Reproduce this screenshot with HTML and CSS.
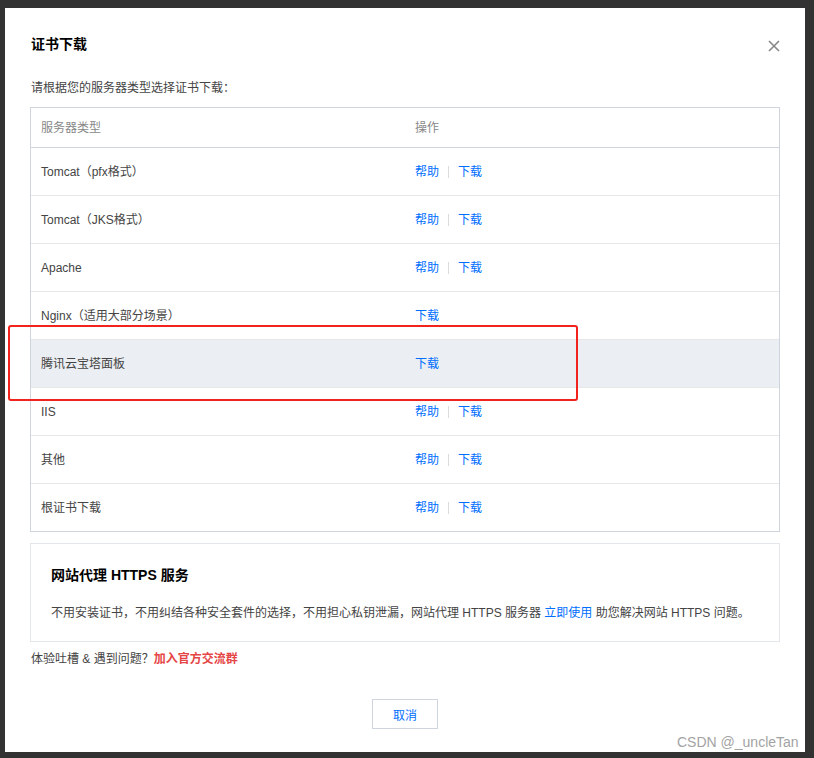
FILE: index.html
```html
<!DOCTYPE html>
<html lang="zh-CN">
<head>
<meta charset="utf-8">
<title>证书下载</title>
<link rel="stylesheet" href="styles.css">
</head>
<body>
<div class="dialog">
  <div class="dialog-head">
    <h2 class="dialog-title">证书下载</h2>
    <span class="close" aria-label="关闭">
      <svg width="12" height="12" viewBox="0 0 12 12"><path d="M1 1L11 11M11 1L1 11" stroke="#888" stroke-width="1.6" fill="none"/></svg>
    </span>
  </div>
  <p class="intro">请根据您的服务器类型选择证书下载：</p>
  <div class="table">
    <div class="row head">
      <div class="cell">服务器类型</div>
      <div class="cell">操作</div>
    </div>
    <div class="row">
      <div class="cell">Tomcat（pfx格式）</div>
      <div class="cell ops"><a class="link">帮助</a><span class="sep"></span><a class="link">下载</a></div>
    </div>
    <div class="row">
      <div class="cell">Tomcat（JKS格式）</div>
      <div class="cell ops"><a class="link">帮助</a><span class="sep"></span><a class="link">下载</a></div>
    </div>
    <div class="row">
      <div class="cell">Apache</div>
      <div class="cell ops"><a class="link">帮助</a><span class="sep"></span><a class="link">下载</a></div>
    </div>
    <div class="row">
      <div class="cell">Nginx（适用大部分场景）</div>
      <div class="cell ops"><a class="link">下载</a></div>
    </div>
    <div class="row active">
      <div class="cell">腾讯云宝塔面板</div>
      <div class="cell ops"><a class="link">下载</a></div>
    </div>
    <div class="row">
      <div class="cell">IIS</div>
      <div class="cell ops"><a class="link">帮助</a><span class="sep"></span><a class="link">下载</a></div>
    </div>
    <div class="row">
      <div class="cell">其他</div>
      <div class="cell ops"><a class="link">帮助</a><span class="sep"></span><a class="link">下载</a></div>
    </div>
    <div class="row">
      <div class="cell">根证书下载</div>
      <div class="cell ops"><a class="link">帮助</a><span class="sep"></span><a class="link">下载</a></div>
    </div>
  </div>
  <div class="promo">
    <h3 class="promo-title">网站代理 HTTPS 服务</h3>
    <p class="promo-text">不用安装证书，不用纠结各种安全套件的选择，不用担心私钥泄漏，网站代理 HTTPS 服务器 <a class="link">立即使用</a> 助您解决网站 HTTPS 问题。</p>
  </div>
  <p class="feedback">体验吐槽 &amp; 遇到问题？<a class="hot">加入官方交流群</a></p>
  <div class="actions">
    <button class="btn">取消</button>
  </div>
</div>
<div class="mark"></div>
<div class="watermark">CSDN @_uncleTan</div>
</body>
</html>
```

FILE: styles.css
```css
* { box-sizing: border-box; }
html, body { margin: 0; padding: 0; }
body {
  background: #323232;
  font-family: "Liberation Sans", "Noto Sans CJK SC", sans-serif;
  font-size: 12px;
  color: #444;
  width: 814px;
  height: 758px;
  overflow: hidden;
  position: relative;
}
.dialog {
  margin: 8px 0 0 5px;
  width: 800px;
  height: 744px;
  background: #fff;
  padding: 26px 25px 0 25px;
}
.dialog-head {
  display: flex;
  justify-content: space-between;
  align-items: center;
  height: 20px;
  padding-left: 1px;
}
.dialog-title {
  margin: 0;
  font-size: 14px;
  line-height: 20px;
  font-weight: 700;
  color: #000;
}
.close {
  display: flex;
  width: 12px;
  height: 12px;
  margin-right: 0;
  margin-top: 4px;
}
.intro {
  margin: 25px 0 0 1px;
  line-height: 18px;
  color: #444;
}
.table {
  margin-top: 10px;
  border: 1px solid #cfd5de;
}
.row {
  display: grid;
  grid-template-columns: 1fr 1fr;
  height: 48px;
  align-items: center;
  border-bottom: 1px solid #e7e7e7;
  color: #444;
}
.row:last-child { border-bottom: none; height: 47px; }
.row.head {
  height: 40px;
  color: #888;
  border-bottom: 1px solid #cfd5de;
}
.row.active { background: #ebeef2; }
.cell {
  padding-left: 10px;
  line-height: 18px;
  white-space: nowrap;
}
.ops { display: flex; align-items: center; }
.link { color: #006eff; text-decoration: none; cursor: pointer; }
.sep {
  display: inline-block;
  width: 1px;
  height: 12px;
  background: #ddd;
  margin: 0 9px 0 9px;
}
.promo {
  margin-top: 11px;
  border: 1px solid #e3e6eb;
  padding: 21px 20px 19px 20px;
}
.promo-title {
  margin: 0;
  font-size: 14px;
  line-height: 20px;
  font-weight: 700;
  color: #000;
}
.promo-text {
  margin: 19px 0 0 0;
  line-height: 18px;
  color: #444;
  white-space: nowrap;
}
.feedback {
  margin: 8px 0 0 1px;
  line-height: 18px;
  color: #444;
}
.hot {
  color: #e54545;
  font-weight: 700;
}
.actions {
  margin-top: 31px;
  display: flex;
  justify-content: center;
}
.btn {
  width: 66px;
  height: 30px;
  background: #fff;
  border: 1px solid #cfd5de;
  color: #006eff;
  font-family: "Liberation Sans", "Noto Sans CJK SC", sans-serif;
  font-size: 12px;
  padding: 0;
  cursor: pointer;
}
.mark {
  position: absolute;
  left: 8px;
  top: 325px;
  width: 570px;
  height: 76px;
  border: 2px solid #f2221c;
  border-radius: 3px;
}
.watermark {
  position: absolute;
  left: 677px;
  top: 733px;
  font-family: "Liberation Sans", sans-serif;
  font-size: 14px;
  line-height: 18px;
  color: #a3a3a3;
}
```
